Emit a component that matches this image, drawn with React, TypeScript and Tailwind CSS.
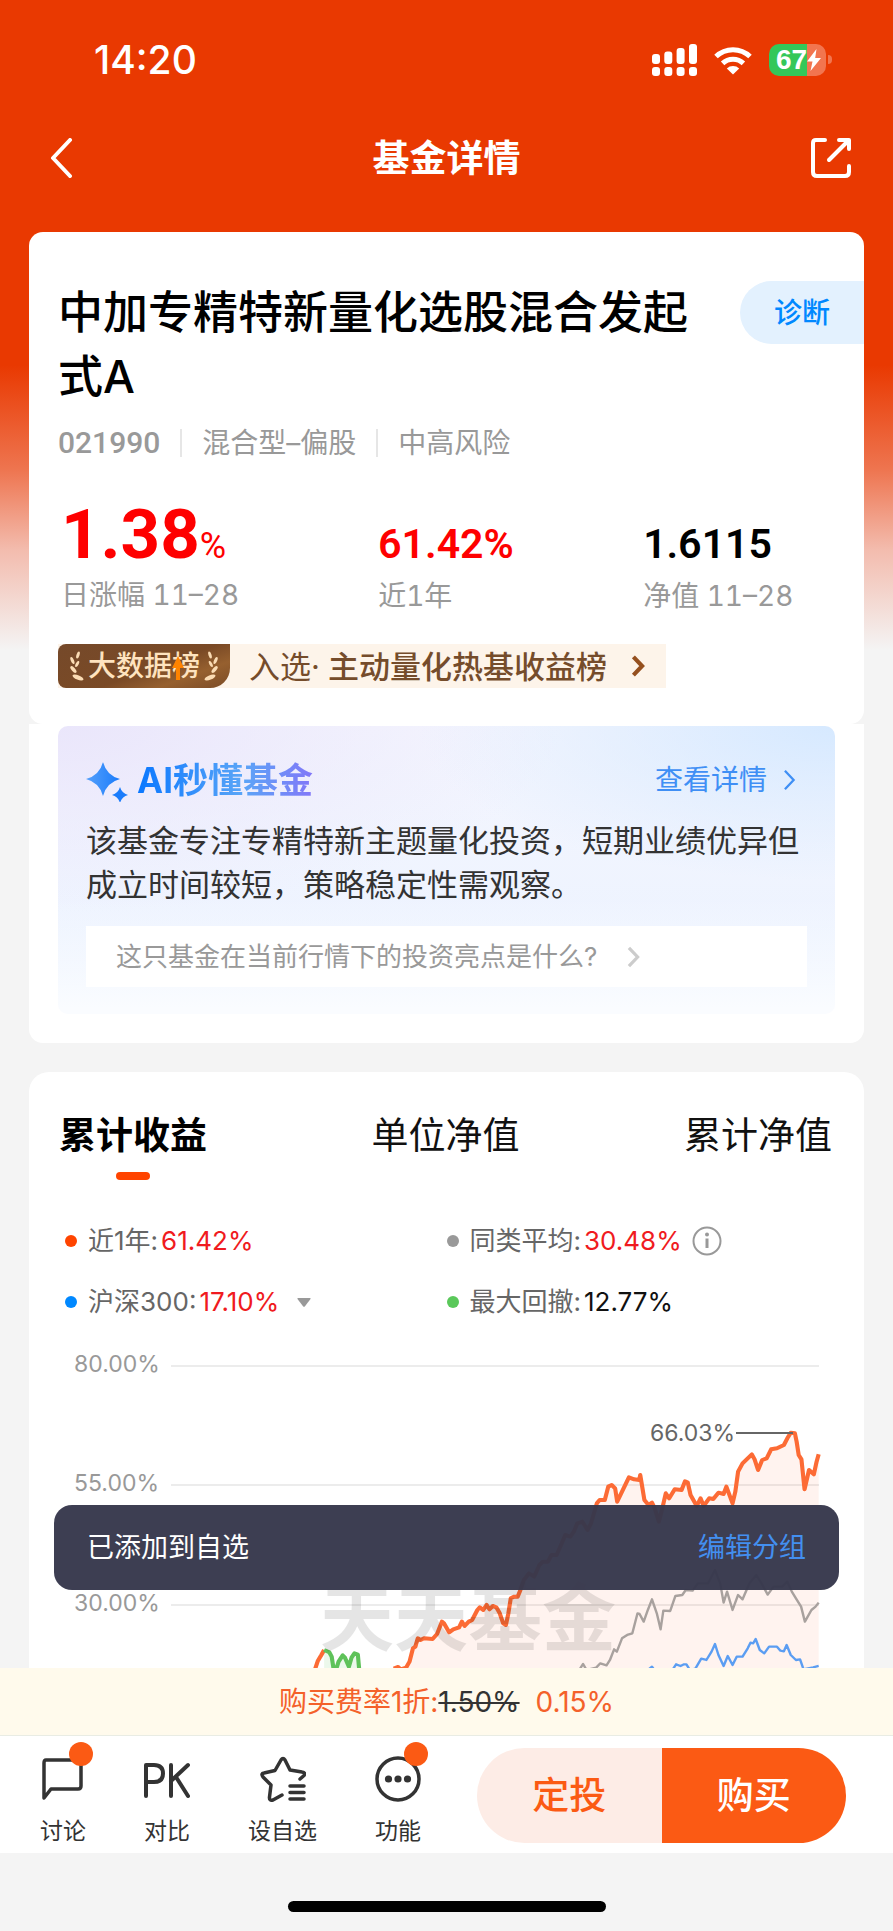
import React from "react";

const NUM = "font-['Roboto','Liberation_Sans',sans-serif]";

const fundLine =
  "272,746 285,741 292,748 308,743 318,725 328,685 335,680 342,655 350,660 360,655 385,657 398,642 412,605 418,610 433,637 445,628 462,622 470,605 478,618 490,605 500,600 515,570 522,562 532,570 542,555 550,568 560,558 570,562 580,580 590,610 598,615 605,580 612,535 622,530 632,530 640,510 650,480 665,460 680,470 695,435 705,425 720,425 730,405 745,405 760,370 770,345 785,350 795,335 805,310 820,305 835,330 845,310 862,250 870,240 885,240 895,200 905,195 915,205 921,245 935,215 955,172 970,178 985,180 988,165 992,190 1000,240 1012,255 1022,248 1030,265 1042,305 1052,265 1062,220 1072,235 1088,208 1108,210 1118,184 1126,188 1134,225 1152,258 1163,235 1172,258 1188,235 1200,237 1215,218 1230,222 1238,200 1256,250 1264,215 1272,155 1285,130 1312,103 1320,118 1330,150 1342,120 1355,115 1368,88 1385,85 1405,75 1415,55 1425,38 1437,40 1442,65 1448,105 1456,118 1465,208 1478,150 1492,163 1500,125 1506,103";
const fundStart = "43,750 52,722 62,705 70,690";
const drawdown =
  "70,690 85,697 92,710 98,750 105,748 112,725 124,706 130,712 142,740 150,712 158,700 168,704 172,750";
const peerLine =
  "812,748 822,732 832,750 860,743 872,730 890,736 900,720 912,688 920,695 935,655 950,645 965,640 980,580 986,582 998,605 1010,570 1022,538 1036,580 1047,628 1055,572 1075,573 1090,528 1110,525 1120,510 1140,512 1155,490 1185,490 1205,450 1220,490 1230,548 1240,515 1256,570 1272,525 1285,538 1305,490 1325,465 1340,490 1358,524 1375,500 1400,500 1415,485 1428,515 1440,535 1455,560 1466,605 1485,570 1497,560 1506,548";
const indexLine =
  "1010,750 1022,740 1030,752 1080,752 1092,733 1105,738 1115,733 1122,733 1132,750 1148,746 1165,716 1180,720 1195,695 1205,672 1215,705 1230,738 1242,708 1256,735 1268,710 1285,710 1300,685 1308,668 1316,670 1323,657 1335,690 1348,700 1362,680 1385,680 1395,692 1405,694 1413,675 1425,705 1440,720 1452,718 1462,748 1490,742 1506,738";

const gridRows = [
  { label: "80.00%", y: 21 },
  { label: "55.00%", y: 140 },
  { label: "30.00%", y: 260 },
];

function Chevron({ className, width = 3 }: { className: string; width?: number }) {
  return (
    <svg viewBox="0 0 14 24" className={className} fill="none" stroke="currentColor" strokeWidth={width}>
      <path d="M2 2 L11.5 12 L2 22" />
    </svg>
  );
}

function StatusBar() {
  return (
    <div className="flex h-[119px] items-center justify-between pl-[94px] pr-[61px] text-white">
      <span className="text-[39px] font-medium leading-none">14:20</span>
      <div className="flex items-center gap-[17px]">
        <svg viewBox="0 0 45 32" className="h-8 w-[45px]" fill="currentColor">
          <rect x="0" y="10" width="8" height="10" rx="3" />
          <rect x="12.3" y="7.5" width="8" height="12.5" rx="3" />
          <rect x="24.6" y="4" width="8" height="16" rx="3" />
          <rect x="37" y="0" width="8" height="20" rx="3" />
          <rect x="0" y="23" width="8" height="9" rx="3" />
          <rect x="12.3" y="23" width="8" height="9" rx="3" />
          <rect x="24.6" y="23" width="8" height="9" rx="3" />
          <rect x="37" y="23" width="8" height="9" rx="3" />
        </svg>
        <svg viewBox="0 0 38 30" className="h-[30px] w-[38px]" fill="none" stroke="currentColor" strokeWidth="5">
          <path d="M2 11.5 A24.5 24.5 0 0 1 36 11.5" />
          <path d="M8.6 18.4 A15 15 0 0 1 29.4 18.4" />
          <path d="M12.8 23.5 A9 9 0 0 1 25.2 23.5 L19 29.5 Z" fill="currentColor" stroke="none" />
        </svg>
        <div className="flex items-center gap-[2px]">
          <div className="relative flex h-8 w-[57px] items-center overflow-hidden rounded-[10px] bg-[linear-gradient(to_right,#34c759_67%,#f2754f_67%)] pl-[7px]">
            <span className="font-['Liberation_Sans',sans-serif] text-[28px] font-bold leading-none">67</span>
            <svg viewBox="0 0 14 22" className="h-[22px] w-[14px] shrink-0" fill="currentColor">
              <path d="M9.5 0 L0 12.5 H5.5 L3.5 22 L14 9 H8.2 Z" />
            </svg>
          </div>
          <div className="h-[9px] w-[4px] rounded-r-full bg-[#f2754f]" />
        </div>
      </div>
    </div>
  );
}

function NavBar() {
  return (
    <header className="flex h-[78px] items-center justify-between px-[41px] text-white">
      <button aria-label="返回" className="w-[42px] pl-2">
        <svg viewBox="0 0 24 40" className="h-10 w-6" fill="none" stroke="currentColor" strokeWidth="4" strokeLinecap="round" strokeLinejoin="round">
          <path d="M21 2 L4 20 L21 38" />
        </svg>
      </button>
      <h1 className="text-[37px] font-bold leading-none">基金详情</h1>
      <button aria-label="分享">
        <svg viewBox="0 0 42 42" className="size-[42px]" fill="none" stroke="currentColor" strokeWidth="4" strokeLinecap="round" strokeLinejoin="round">
          <path d="M15 3 H6 Q3 3 3 6 V35 Q3 39 7 39 H35 Q39 39 39 35 V29" />
          <path d="M29 3 H39 V12" />
          <path d="M38 4 L19 23" />
        </svg>
      </button>
    </header>
  );
}

function Laurel({ className }: { className: string }) {
  return (
    <svg viewBox="0 0 14 30" className={className} fill="#fbdcb4">
      <ellipse cx="8" cy="4" rx="1.5" ry="3.6" transform="rotate(18 8 4)" />
      <ellipse cx="2.4" cy="9.5" rx="1.6" ry="3.8" transform="rotate(-22 2.4 9.5)" />
      <ellipse cx="7.2" cy="13" rx="1.4" ry="3.4" transform="rotate(28 7.2 13)" />
      <ellipse cx="3.4" cy="18.5" rx="1.8" ry="4.2" transform="rotate(-42 3.4 18.5)" />
      <ellipse cx="8" cy="26.5" rx="2.2" ry="5.8" transform="rotate(-68 8 26.5)" />
    </svg>
  );
}

function FundCard() {
  return (
    <section className="rounded-[14px] bg-white pb-9 pl-[29px] pt-[49px]">
      <div className="flex items-start">
        <h2 className="mr-5 flex-1 text-[45px] font-medium leading-[64px] text-black">中加专精特新量化选股混合发起式A</h2>
        <button className="h-[63px] w-[124px] rounded-l-full bg-[#e3f1fe] text-[28px] font-medium leading-none text-[#0088ff]">诊断</button>
      </div>
      <div className="mt-[14px] flex h-10 items-center text-[28px] leading-none text-[#999]">
        <span className={`${NUM} text-[30px] font-medium`}>021990</span>
        <span className="mx-5 h-7 w-[2px] bg-[#e6e6e6]" />
        <span>混合型–偏股</span>
        <span className="mx-5 h-7 w-[2px] bg-[#e6e6e6]" />
        <span>中高风险</span>
      </div>
      <div className="mt-8 grid grid-cols-[316fr_264fr_220fr] items-baseline pl-[3px] text-[28px] tabular-nums text-[#999]">
        <div>
          <div className={`${NUM} text-[69px] font-bold leading-[80px] text-[#fe0000]`}>
            1.38<span className="text-[36px] font-normal leading-none">%</span>
          </div>
          <div className="leading-10">日涨幅 11–28</div>
        </div>
        <div>
          <div className={`${NUM} text-[41px] font-semibold leading-[64px] text-[#fe0000]`}>61.42%</div>
          <div className="leading-10">近1年</div>
        </div>
        <div>
          <div className={`${NUM} text-[41px] font-semibold leading-[64px] text-black`}>1.6115</div>
          <div className="leading-10">净值 11–28</div>
        </div>
      </div>
      <a href="#rank" className="mt-7 flex h-11 w-fit items-center bg-[#fdf4ea] pr-[21px] text-[31px] leading-none text-[#754c2b]">
        <span className="relative flex h-full w-[172px] items-center justify-center gap-1 rounded-l-lg rounded-br-[20px] bg-[linear-gradient(160deg,#75492a,#7a4a26_55%,#96602f_75%,#7c4c27)] text-[28px] font-medium text-[#fee3bf]">
          <Laurel className="h-[30px] w-[14px]" />
          大数据榜
          <Laurel className="h-[30px] w-[14px] -scale-x-100" />
          <svg viewBox="0 0 12 24" className="absolute left-[114px] top-[12px] h-6 w-3" fill="#ff8300">
            <path d="M6 0 L12 12 H8 V24 H4 V12 H0 Z" />
          </svg>
        </span>
        <span className="ml-[19px]">入选·</span>
        <span className="ml-2 font-medium">主动量化热基收益榜</span>
        <Chevron className="ml-6 h-[22px] w-[14px] text-[#95501f]" width={4.5} />
      </a>
    </section>
  );
}

function AiCard() {
  return (
    <section className="rounded-b-[14px] bg-white px-[29px] pb-[29px] pt-[2px]">
      <div className="rounded-[10px] bg-[linear-gradient(to_bottom,transparent_60%,#fafcff_98%),radial-gradient(ellipse_at_100%_0%,#d6e9ff_0%,transparent_38%),radial-gradient(ellipse_at_0%_0%,#eae6fb_0%,transparent_46%),linear-gradient(#f5f6fe,#eaf2ff)] px-7 pb-[27px] pt-8">
        <div className="flex h-11 items-center">
          <svg viewBox="0 0 44 44" className="size-11">
            <defs>
              <linearGradient id="spark" x1="0" x2="1">
                <stop offset="0" stopColor="#55a0fb" />
                <stop offset="1" stopColor="#1b7cfb" />
              </linearGradient>
            </defs>
            <path d="M17 4 Q20.500 17.500 34 21 Q20.500 24.500 17 38 Q13.500 24.500 0 21 Q13.500 17.500 17 4 Z" fill="url(#spark)" />
            <path d="M34 29 Q35.800 35.200 42 37 Q35.800 38.800 34 45 Q32.200 38.800 26 37 Q32.200 35.200 34 29 Z" fill="#1b7cfb" />
          </svg>
          <h3 className="ml-[7px] bg-[linear-gradient(to_right,#0a78ff,#5aa5f7_60%,#8377f8)] bg-clip-text text-[35px] font-bold leading-[44px] text-transparent">AI秒懂基金</h3>
          <a href="#detail" className="ml-auto mr-[11px] flex items-center gap-4 text-[28px] leading-none text-[#3f8ff5]">
            查看详情
            <Chevron className="h-[22px] w-[13px]" width={2.5} />
          </a>
        </div>
        <p className="mt-[17px] text-[31px] leading-[44px] text-[#333]">该基金专注专精特新主题量化投资，短期业绩优异但成立时间较短，策略稳定性需观察。</p>
        <button className="mt-[19px] flex h-[61px] w-full items-center bg-white pl-[30px] text-[26px] leading-none text-[#999]">
          这只基金在当前行情下的投资亮点是什么?
          <Chevron className="ml-[30px] h-[22px] w-[13px] text-[#ccc]" width={3.5} />
        </button>
      </div>
    </section>
  );
}

function LegendItem({ dot, label, value, red = true, children }: { dot: string; label: string; value: string; red?: boolean; children?: React.ReactNode }) {
  return (
    <div className="flex h-9 items-center text-[26px] leading-none text-[#666]">
      <span className={`mr-[11px] size-3 rounded-full ${dot}`} />
      {label}:
      <span className={`ml-[3px] ${red ? "text-[#f01a20]" : "text-[#111]"}`}>{value}</span>
      {children}
    </div>
  );
}

function ReturnsChart() {
  return (
    <svg viewBox="0 0 777 323" className="mt-[25px] block w-full" role="img" aria-label="累计收益走势">
      {gridRows.map((r) => (
        <g key={r.label}>
          <text x="16" y={r.y + 6} fontSize="23" fill="#999">{r.label}</text>
          <line x1="113" x2="761" y1={r.y} y2={r.y} stroke="#ececec" strokeWidth="2" />
        </g>
      ))}
      <g transform="translate(242 75) scale(0.3444 0.3333)" fill="none" strokeLinejoin="round">
        <polygon points={`${fundLine} 1506,760 272,760`} fill="#fb6a35" fillOpacity="0.08" />
        <polygon points={`${drawdown} 70,750`} fill="#5fc25a" fillOpacity="0.12" />
        <polyline points={indexLine} stroke="#5b9df2" strokeWidth="7" />
        <polyline points={peerLine} stroke="#a8a19e" strokeWidth="7" />
        <polyline points={fundStart} stroke="#fc6b35" strokeWidth="12" />
        <polyline points={fundLine} stroke="#fc6b35" strokeWidth="12" />
        <polyline points={drawdown} stroke="#5fc25a" strokeWidth="12" />
      </g>
      <text x="262" y="300" fontSize="74" fontWeight="700" fill="#000" fillOpacity="0.1">天天基金</text>
      <line x1="678" x2="735" y1="88" y2="88" stroke="#666" strokeWidth="2" />
      <text x="677" y="96" fontSize="23" textAnchor="end" fill="#666">66.03%</text>
    </svg>
  );
}

function ChartCard() {
  return (
    <section className="relative mt-[29px] rounded-t-[20px] bg-white px-[29px] pt-10">
      <nav className="flex justify-between pl-[1px] pr-[3px] text-[37px] leading-[48px] text-[#111]">
        <button className="flex flex-col items-center font-bold text-black">
          累计收益
          <span className="mt-3 h-2 w-[34px] rounded-full bg-[#ff4400]" />
        </button>
        <button className="self-start">单位净值</button>
        <button className="self-start">累计净值</button>
      </nav>
      <div className="mt-[43px] grid grid-cols-[382fr_389fr] gap-y-[25px] pl-[7px]">
        <LegendItem dot="bg-[#ff4400]" label="近1年" value="61.42%" />
        <LegendItem dot="bg-[#999]" label="同类平均" value="30.48%">
          <svg viewBox="0 0 30 30" className="ml-[10px] size-[30px]" fill="none" stroke="#999" strokeWidth="2">
            <circle cx="15" cy="15" r="13.500" />
            <path d="M15 12.500 V22" strokeWidth="3" />
            <circle cx="15" cy="8.500" r="2" fill="#999" stroke="none" />
          </svg>
        </LegendItem>
        <LegendItem dot="bg-[#0088ff]" label="沪深300" value="17.10%">
          <svg viewBox="0 0 14 9" className="ml-[18px] h-[9px] w-[14px]" fill="#999">
            <path d="M1 0 H13 Q14 0 13.500 1 L8 8.300 Q7 9.300 6 8.300 L0.500 1 Q0 0 1 0 Z" />
          </svg>
        </LegendItem>
        <LegendItem dot="bg-[#5ac85a]" label="最大回撤" value="12.77%" red={false} />
      </div>
      <ReturnsChart />
      <div role="status" className="absolute inset-x-[25px] bottom-[78px] flex h-[85px] items-center justify-between rounded-[18px] bg-[#37384c]/97 px-[33px] text-[27px] leading-none text-white">
        <span>已添加到自选</span>
        <button className="text-[#438ff0]">编辑分组</button>
      </div>
    </section>
  );
}

function TabItem({ label, dot, children }: { label: string; dot?: boolean; children: React.ReactNode }) {
  return (
    <button className="flex flex-col items-center text-[23px] leading-[30px] text-[#333]">
      <span className="relative mb-[13px] flex h-12 w-[46px] items-center justify-center">
        {children}
        {dot && <span className="absolute -right-[7px] -top-[13px] size-6 rounded-full bg-[#fb5a14]" />}
      </span>
      {label}
    </button>
  );
}

function Footer() {
  return (
    <footer>
      <div className="flex h-[68px] items-center justify-center border-b border-[#e9ece4] bg-[#fffaec] text-[28px] leading-none text-[#f4612a]">
        购买费率1折:<s className="text-[#333]">1.50%</s>
        <span className="ml-4">0.15%</span>
      </div>
      <div className="flex h-[117px] bg-white pr-[47px]">
        <div className="flex flex-1 items-start justify-between pl-10 pr-14 pt-[19px]">
          <TabItem label="讨论" dot>
            <svg viewBox="0 0 46 48" className="h-12 w-[46px]" fill="none" stroke="#333" strokeWidth="3.500" strokeLinejoin="round">
              <path d="M6 5 H38 Q41 5 41 8 V31 Q41 34 38 34 H11 L4 43 V8 Q4 5 6 5 Z" />
            </svg>
          </TabItem>
          <TabItem label="对比">
            <svg viewBox="0 0 46 48" className="h-12 w-[46px]" fill="none" stroke="#333" strokeWidth="4" strokeLinecap="round" strokeLinejoin="round">
              <path d="M2 41 V10 H10 Q19 10 19 18.500 Q19 27 10 27 H2" />
              <path d="M27 10 V41 M44 10 L27 26 M32 22 L44 41" />
            </svg>
          </TabItem>
          <TabItem label="设自选">
            <svg viewBox="0 0 46 48" className="h-12 w-[46px]" fill="none" stroke="#333" strokeWidth="3.500" strokeLinecap="round" strokeLinejoin="round">
              <path d="M22 40 L13 45 Q9 46 9.500 42 L11 30 L3 22 Q0.500 18.500 4 18 L15 15.500 L21 5 Q23 2 25 5 L30 15 L42 17 Q46 17.500 44 20.500 L40 24" />
              <path d="M30 31 H44 M30 37.500 H44 M30 44 H44" />
            </svg>
          </TabItem>
          <TabItem label="功能" dot>
            <svg viewBox="0 0 46 48" className="h-12 w-[46px]" fill="none" stroke="#333" strokeWidth="3.500">
              <circle cx="23" cy="24" r="21" />
              <g fill="#333" stroke="none">
                <circle cx="13.500" cy="24" r="3.600" />
                <circle cx="23" cy="24" r="3.600" />
                <circle cx="32.500" cy="24" r="3.600" />
              </g>
            </svg>
          </TabItem>
        </div>
        <div className="mt-3 flex h-[95px] w-[369px] overflow-hidden rounded-full text-[37px] font-medium leading-none">
          <button className="flex-1 bg-[#fdece6] text-[#fb5a14]">定投</button>
          <button className="flex-1 bg-[#fb5a14] text-white">购买</button>
        </div>
      </div>
      <div className="flex justify-center pb-[19px] pt-12">
        <div className="h-[11px] w-[318px] rounded-full bg-black" />
      </div>
    </footer>
  );
}

export default function App() {
  return (
    <div className="min-h-screen bg-[#f4f4f4] bg-[linear-gradient(#e93901_0px,#e93901_365px,#ee7550_470px,#f3bcae_550px,#f4f4f4_650px)] font-['Inter','Noto_Sans_CJK_SC',sans-serif]">
      <StatusBar />
      <NavBar />
      <main className="px-[29px] pt-[35px]">
        <FundCard />
        <AiCard />
        <ChartCard />
      </main>
      <Footer />
    </div>
  );
}
